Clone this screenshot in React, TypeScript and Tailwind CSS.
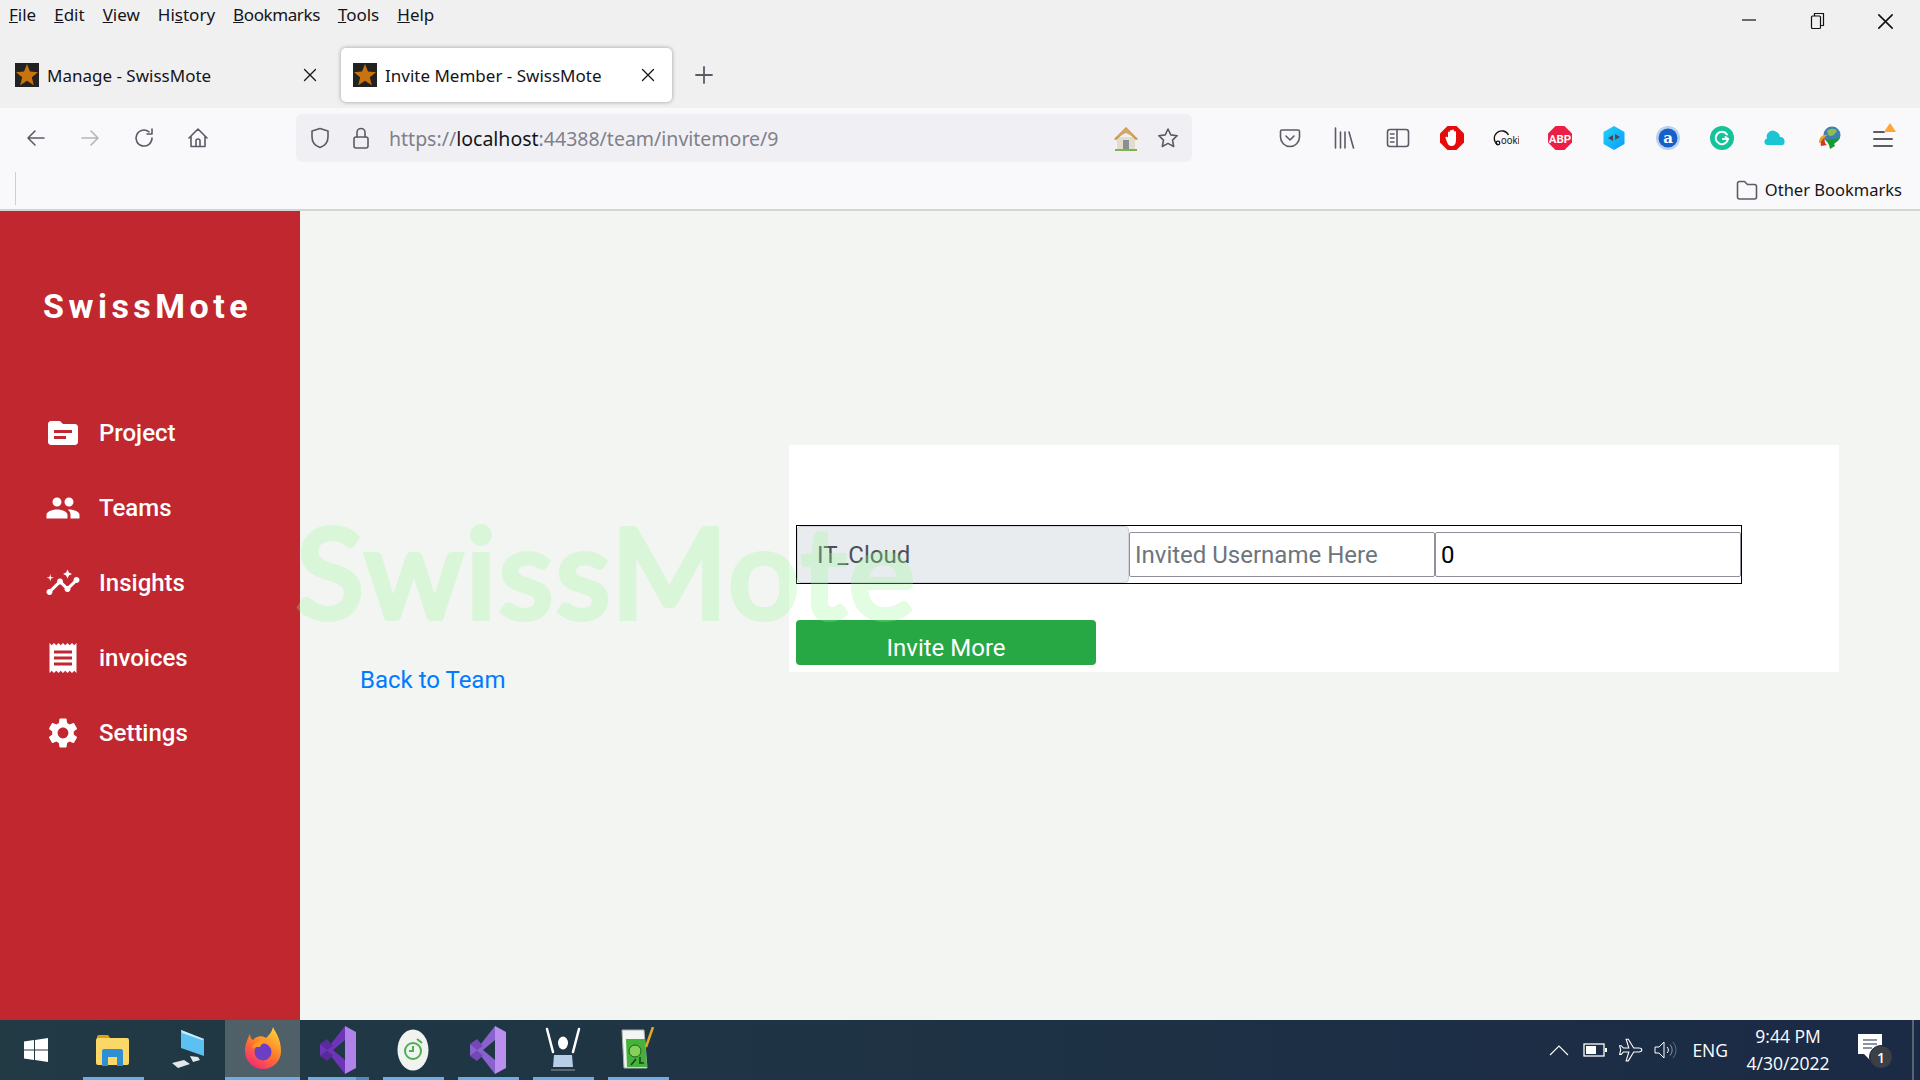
import React from "react";
import { MdInsights, MdPeople, MdReceipt, MdSettings, MdTopic } from "react-icons/md";

const chromeFont = "font-['Noto_Sans','Open_Sans',sans-serif]";

const Favicon = () => (
	<svg width="24" height="24" viewBox="0 0 24 24" className="shrink-0">
		<rect width="24" height="24" fill="#222222" />
		<path d="M12 1l3 7.6 8 .6-6.200 5 2 8L12 17.800 5.200 22.200l2-8L1 9.200l8-.6z" fill="#c9730f" />
	</svg>
);

const Stroke = ({ size = 24, color = "#5b5b66", width = 1.6, children }: { size?: number; color?: string; width?: number; children: React.ReactNode }) => (
	<svg width={size} height={size} viewBox="0 0 24 24" fill="none" stroke={color} strokeWidth={width} strokeLinecap="round" strokeLinejoin="round">
		{children}
	</svg>
);

const Close = ({ size = 14, color = "#15141a" }: { size?: number; color?: string }) => (
	<svg width={size} height={size} viewBox="0 0 14 14" stroke={color} strokeWidth="1.300" strokeLinecap="round">
		<path d="M1.500 1.500l11 11M12.500 1.500l-11 11" />
	</svg>
);

const Tab = ({ title, active }: { title: string; active?: boolean }) => (
	<div
		className={
			active
				? "flex items-center w-[331px] h-[54px] pl-[12px] pr-[17px] bg-white rounded-[5px] shadow-[0_0_4px_rgba(0,0,0,0.35)]"
				: "flex items-center w-[341px] h-[54px] pl-[15px] pr-[24px]"
		}
	>
		<Favicon />
		<span className={`ml-[8px] pt-[1px] text-[17px] text-[#15141a] ${chromeFont}`}>{title}</span>
		<span className="ml-auto">
			<Close />
		</span>
	</div>
);

const ToolSlot = ({ children }: { children: React.ReactNode }) => (
	<div className="w-[54px] h-[48px] flex items-center justify-center shrink-0">{children}</div>
);

const extensionIcons = [
	<Stroke key="pocket">
		<path d="M4 4h16a1.500 1.500 0 0 1 1.500 1.500V11a9.500 9.500 0 0 1-19 0V5.500A1.500 1.500 0 0 1 4 4z" />
		<path d="M8 10l4 4 4-4" />
	</Stroke>,
	<Stroke key="library">
		<path d="M3.500 2v20M8.500 6v16M13 6v16M17 6l4.500 16" />
	</Stroke>,
	<Stroke key="sidebar">
		<rect x="1.500" y="3.500" width="21" height="17" rx="2.500" />
		<path d="M11 3.500v17M4.500 8h3.500M4.500 12h3.500M4.500 16h3.500" />
	</Stroke>,
	<svg key="stop" width="24" height="24" viewBox="0 0 24 24">
		<path d="M7.500 0h9L24 7.500v9L16.500 24h-9L0 16.500v-9z" fill="#e50b0b" />
		<path d="M8 11V6.500a1 1 0 0 1 2 0V5a1 1 0 0 1 2 0v-.500a1 1 0 0 1 2 0V6a1 1 0 0 1 2 0v8c0 4-1.500 6-4.500 6-2.500 0-3.500-1.500-4.500-4l-1.500-4c-.4-1.200 1.200-1.800 1.800-.8z" fill="#ffffff" />
	</svg>,
	<svg key="cooki" width="26" height="24" viewBox="0 0 26 24">
		<path d="M4.500 18.500A7.500 7.500 0 1 1 15.500 9" fill="none" stroke="#111111" strokeWidth="1.300" />
		<circle cx="5" cy="17" r="1.800" fill="none" stroke="#111111" strokeWidth="1.300" />
		<text x="8" y="18" fontSize="10" fill="#222222" fontFamily="Roboto, sans-serif">ooki</text>
	</svg>,
	<svg key="abp" width="24" height="24" viewBox="0 0 24 24">
		<path d="M7.500 0h9L24 7.500v9L16.500 24h-9L0 16.500v-9z" fill="#ed1e45" />
		<text x="12" y="16.500" fontSize="11.500" fontWeight="700" textAnchor="middle" fill="#ffffff" fontFamily="Roboto, sans-serif">ABP</text>
	</svg>,
	<svg key="hex" width="24" height="24" viewBox="0 0 24 24">
		<defs>
			<linearGradient id="hexBlue" x1="0" y1="0" x2="1" y2="1">
				<stop offset="0" stopColor="#22d3f5" />
				<stop offset="1" stopColor="#0a9bff" />
			</linearGradient>
		</defs>
		<path d="M12 0l10.500 6v12L12 24 1.500 18V6z" fill="url(#hexBlue)" />
		<path d="M11 9v6l-5-3zM13 8v6l5-3z" fill="#4a4a4a" />
	</svg>,
	<svg key="alexa" width="24" height="24" viewBox="0 0 24 24">
		<circle cx="12" cy="12" r="12" fill="#b9d0ee" />
		<circle cx="12" cy="12" r="9.500" fill="#1560c9" />
		<text x="12" y="17" fontSize="15" fontWeight="700" textAnchor="middle" fill="#ffffff" fontFamily="'DejaVu Serif', serif">a</text>
	</svg>,
	<svg key="grammarly" width="24" height="24" viewBox="0 0 24 24">
		<circle cx="12" cy="12" r="12" fill="#15c39a" />
		<path d="M17 8.500A6.200 6.200 0 1 0 18 13h-5M18 13l-2.500-2" fill="none" stroke="#ffffff" strokeWidth="2" strokeLinecap="round" />
	</svg>,
	<svg key="cloud" width="24" height="24" viewBox="0 0 24 24">
		<path d="M3.500 19a3.300 3.300 0 0 1-.5-6.500 6 6 0 0 1 9.500-6.500 6 6 0 0 1 3.500 5 4 4 0 0 1 4.500 4 4 4 0 0 1-1.500 4z" fill="#19c6d1" />
	</svg>,
	<svg key="idm" width="24" height="24" viewBox="0 0 24 24">
		<circle cx="14" cy="9" r="8.500" fill="#3f7fb5" />
		<path d="M9 5c3-3 8-3 10 0-2 2-3 5-6 5s-3-3-4-5z" fill="#8fbf4a" />
		<path d="M1 17c0-6 4-9 9-8-3 1-5 4-4 7z" fill="#e9a11b" />
		<path d="M3 20c-1-4 1-7 4-8-1 3 0 6 2 7z" fill="#d2362c" />
		<path d="M8 14l14-2-6 6 1 2-5 3-1-4z" fill="#169c2d" />
	</svg>,
	<svg key="menu" width="26" height="28" viewBox="0 0 26 28" className="mb-[4px]">
		<path d="M3 10h10M3 17h18M3 24h18" stroke="#5b5b66" strokeWidth="2" strokeLinecap="round" />
		<path d="M19 1l6 9H13z" fill="#ffa436" />
	</svg>,
];

const BrowserChrome = () => (
	<div className={`shrink-0 ${chromeFont}`}>
		<div className="bg-[#f0f0f0] h-[108px]">
			<div className="flex h-[36px]">
				<div className="flex items-center gap-[18px] pl-[9px] text-[17px] leading-none text-[#15141a] h-[28px]">
					<span><u>F</u>ile</span>
					<span><u>E</u>dit</span>
					<span><u>V</u>iew</span>
					<span>Hi<u>s</u>tory</span>
					<span className="tracking-[-0.4px]"><u>B</u>ookmarks</span>
					<span><u>T</u>ools</span>
					<span><u>H</u>elp</span>
				</div>
				<div className="ml-auto flex h-[42px]">
					<div className="w-[69px] flex items-center justify-center pb-[2px]">
						<svg width="16" height="16" viewBox="0 0 16 16"><path d="M1 8h14" stroke="#111111" strokeWidth="1.200" /></svg>
					</div>
					<div className="w-[69px] flex items-center justify-center">
						<svg width="16" height="18" viewBox="0 0 16 18" fill="none" stroke="#111111" strokeWidth="1.200">
							<path d="M4.500 4V1.500h9v12H11" />
							<rect x="1.500" y="4" width="9" height="12.500" rx="1" />
						</svg>
					</div>
					<div className="w-[68px] pr-[1px] flex items-center justify-center">
						<Close size={17} color="#111111" />
					</div>
				</div>
			</div>
			<div className="flex items-center h-[72px] pt-[6px]">
				<Tab title="Manage - SwissMote" />
				<Tab title="Invite Member - SwissMote" active />
				<div className="ml-[22px]">
					<svg width="20" height="20" viewBox="0 0 20 20"><path d="M10 2v16M2 10h16" stroke="#5b5b66" strokeWidth="1.800" strokeLinecap="round" /></svg>
				</div>
			</div>
		</div>
		<div className="bg-[#f9f9fb] h-[103px] border-b-2 border-[#d4d4d4]">
			<div className="flex items-center h-[60px] pl-[9px]">
				<ToolSlot>
					<Stroke><path d="M20 12H5M11 5l-7 7 7 7" /></Stroke>
				</ToolSlot>
				<ToolSlot>
					<Stroke color="#b5b5ba"><path d="M4 12h15M13 5l7 7-7 7" /></Stroke>
				</ToolSlot>
				<ToolSlot>
					<Stroke><path d="M20 12a8 8 0 1 1-3-6.200M20 3v5h-5" /></Stroke>
				</ToolSlot>
				<ToolSlot>
					<Stroke><path d="M3 12l9-9 9 9M5 10v10.500h14V10M10 20.500V15a2 2 0 0 1 4 0v5.500" /></Stroke>
				</ToolSlot>
				<div className="ml-[71px] w-[896px] h-[48px] bg-[#f0f0f4] rounded-[6px] flex items-center pl-[12px] pr-[12px]">
					<Stroke><path d="M12 2.500l8 2.500v6c0 5.500-3.500 9-8 10.500C7.500 20 4 16.500 4 11V5z" /></Stroke>
					<span className="ml-[17px]">
						<Stroke><rect x="5" y="11" width="14" height="11" rx="2" /><path d="M8 11V6.500a4 4 0 0 1 8 0V11" /></Stroke>
					</span>
					<span className="ml-[16px] pt-[2px] text-[19.5px] text-[#80808a] whitespace-nowrap">
						https://<span className="text-[#15141a]">localhost</span>:44388/team/invitemore/9
					</span>
					<span className="ml-auto">
						<svg width="26" height="26" viewBox="0 0 26 26">
							<path d="M4 12h18v12H4z" fill="#e3dccb" />
							<path d="M1 14L13 2l12 12-2 1L13 6 3 15z" fill="#c98f42" />
							<path d="M3 13L13 3l10 10-10-5z" fill="#d7a763" />
							<rect x="10" y="15" width="6" height="9" fill="#8a8f94" />
							<path d="M2 24h22v2H2z" fill="#7cb54b" />
						</svg>
					</span>
					<span className="ml-[17px]">
						<Stroke><path d="M12 3l2.800 5.900 6.400.8-4.700 4.400 1.200 6.400-5.700-3.100-5.700 3.100 1.200-6.400-4.700-4.400 6.400-.8z" /></Stroke>
					</span>
				</div>
				<div className="ml-auto flex items-center pr-[9px]">
					{extensionIcons.map((icon) => (
						<ToolSlot key={icon.key}>{icon}</ToolSlot>
					))}
				</div>
			</div>
			<div className="flex items-center h-[41px] pl-[15px] pr-[18px]">
				<div className="w-px h-[33px] bg-[#cfcfd3]" />
				<div className="ml-auto mt-[3px] flex items-center gap-[6px]">
					<Stroke size={24}><path d="M2.500 18.500v-13a2 2 0 0 1 2-2h5l3 3h7a2 2 0 0 1 2 2v10.500a2 2 0 0 1-2 2h-15a2 2 0 0 1-2-2z" /></Stroke>
					<span className="text-[16.5px] text-[#15141a]">Other Bookmarks</span>
				</div>
			</div>
		</div>
	</div>
);

const navItems = [
	{ label: "Project", icon: <MdTopic size={36} /> },
	{ label: "Teams", icon: <MdPeople size={36} /> },
	{ label: "Insights", icon: <MdInsights size={36} /> },
	{ label: "invoices", icon: <MdReceipt size={36} /> },
	{ label: "Settings", icon: <MdSettings size={36} /> },
];

const Sidebar = () => (
	<aside className="w-[300px] shrink-0 bg-[#c1272f] text-white font-['Roboto',sans-serif]">
		<div className="pl-[43px] pt-[72px] text-[34px] leading-[46px] font-bold tracking-[4.5px]">SwissMote</div>
		<nav className="mt-[86px] flex flex-col gap-[39px] pl-[45px]">
			{navItems.map((item) => (
				<div key={item.label} className="flex items-center h-[36px] gap-[18px] text-[24px] font-medium">
					{item.icon}
					<span>{item.label}</span>
				</div>
			))}
		</nav>
	</aside>
);

const TrayIcons = () => (
	<div className="flex items-center">
		<svg width="20" height="12" viewBox="0 0 20 12" fill="none" stroke="#ffffff" strokeWidth="1.100"><path d="M1 11l9-9 9 9" /></svg>
		<svg width="24" height="14" viewBox="0 0 24 14" className="ml-[14px]">
			<rect x="1" y="1" width="20" height="12" fill="none" stroke="#ffffff" strokeWidth="1.300" />
			<rect x="3" y="3" width="10" height="8" fill="#ffffff" />
			<rect x="22" y="5" width="2" height="4" fill="#ffffff" />
		</svg>
		<svg width="26" height="26" viewBox="0 0 24 24" fill="none" stroke="#ffffff" strokeWidth="1" className="ml-[11px]">
			<path d="M22 12c0-1-1.500-1.800-3-1.800h-4.500L9.500 2H7.500l2.500 8.200H5L3 8H1.500l1 4-1 4H3l2-2.200h5L7.500 22h2l5-8.200H19c1.500 0 3-.8 3-1.800z" />
		</svg>
		<svg width="24" height="20" viewBox="0 0 24 20" fill="none" stroke="#ffffff" strokeWidth="1" className="ml-[10px]">
			<path d="M1 7h4l5-5v16l-5-5H1z" />
			<path d="M13 7a4 4 0 0 1 0 6" />
			<path d="M16 4.500a8 8 0 0 1 0 11" stroke="#8a93a3" />
			<path d="M19 2a12 12 0 0 1 0 16" stroke="#5f6b80" />
		</svg>
	</div>
);

const VisualStudio = ({ dark }: { dark?: boolean }) => (
	<svg width="36" height="48" viewBox="0 0 36 48">
		<path d="M25 0l11 6v36l-11 6z" fill={dark ? "#b183ea" : "#bb8fee"} />
		<path d="M25 0L7 23 0 18v12l7-5 18 23V34L13 24 25 14z" fill={dark ? "#6f35b8" : "#8a62cf"} />
		<path d="M0 18l7-5 6 7-6 4zM0 30l7-5 6 4-6 6z" fill={dark ? "#5a2a9c" : "#7548b8"} />
	</svg>
);

const TaskSlot = ({ children, running, active, split }: { children: React.ReactNode; running?: boolean; active?: boolean; split?: boolean }) => (
	<div className={active ? "relative w-[75px] flex items-center justify-center bg-[#4f6068]" : "relative w-[75px] flex items-center justify-center"}>
		{children}
		{running && !split && <div className={active ? "absolute bottom-0 left-0 right-0 h-[3px] bg-[#69afe5]" : "absolute bottom-0 left-[8px] right-[6px] h-[3px] bg-[#69afe5]"} />}
		{split && (
			<div className="absolute bottom-0 left-[8px] right-[6px] h-[3px] flex">
				<div className="w-[48px] bg-[#69afe5]" />
				<div className="flex-1 bg-[#4d8cbb]" />
			</div>
		)}
	</div>
);

const Taskbar = () => (
	<div className="h-[60px] shrink-0 flex bg-gradient-to-r from-[#213a44] to-[#1b2a45] text-white font-['Open_Sans',sans-serif]">
		<TaskSlot>
			<svg width="24" height="24" viewBox="0 0 24 24" fill="#ffffff" className="mr-[3px]">
				<path d="M0 3.400l10-1.400v9.500H0zM11 1.900L24 0v11.500H11zM0 12.500h10V22L0 20.600zM11 12.500h13V24l-13-1.900z" />
			</svg>
		</TaskSlot>
		<TaskSlot running>
			<svg width="33" height="32" viewBox="0 0 33 32">
				<path d="M1 3a2 2 0 0 1 2-2h9l3 4h-14z" fill="#dfa106" />
				<rect x="0" y="4" width="33" height="27" rx="2" fill="#fbd768" />
				<path d="M6 32V17a2 2 0 0 1 2-2h17a2 2 0 0 1 2 2v15h-6v-9h-9v9z" fill="#2f8fd3" />
			</svg>
		</TaskSlot>
		<TaskSlot>
			<svg width="34" height="40" viewBox="0 0 34 40">
				<path d="M10 0l23 9v17L10 18z" fill="#5cc1f2" />
				<path d="M10 0l23 9-2 1L11 3z" fill="#c7ecfb" />
				<path d="M1 33l12-3 6 4-12 4zM19 26l8 1 2 3-7 2z" fill="#e3e7ea" />
			</svg>
		</TaskSlot>
		<TaskSlot running active>
			<svg width="36" height="48" viewBox="0 0 36 48">
				<defs>
					<linearGradient id="foxFlame" x1="0.800" y1="0" x2="0.200" y2="1">
						<stop offset="0" stopColor="#ffd43a" />
						<stop offset="0.500" stopColor="#ff7a2a" />
						<stop offset="1" stopColor="#f5217e" />
					</linearGradient>
				</defs>
				<path d="M28 1c2 5 8 11 8 24a18 18 0 0 1-36 0C0 18 3 12 5 8c0 3 1 5 3 6 3-4 9-5 13-2 3-3 6-6 7-11z" fill="url(#foxFlame)" />
				<circle cx="18" cy="26" r="8.500" fill="#6b3fc4" />
				<path d="M7 22c3-7 11-10 17-6-5 0-8 2-9 5-3 0-5 0-8 1z" fill="#ff9a1f" />
			</svg>
		</TaskSlot>
		<TaskSlot running split>
			<VisualStudio dark />
		</TaskSlot>
		<TaskSlot running>
			<svg width="32" height="42" viewBox="0 0 32 42">
				<ellipse cx="16" cy="21" rx="15.500" ry="20.500" fill="#f1f3f1" />
				<circle cx="16" cy="22" r="8" fill="none" stroke="#4caf50" strokeWidth="2" />
				<path d="M16 17v5h-4M20 10l5 4" fill="none" stroke="#4caf50" strokeWidth="2" />
			</svg>
		</TaskSlot>
		<TaskSlot running>
			<VisualStudio />
		</TaskSlot>
		<TaskSlot running>
			<svg width="36" height="46" viewBox="0 0 36 46">
				<path d="M2 2l6 23M34 2l-6 23" stroke="#ffffff" strokeWidth="2.500" strokeLinecap="round" />
				<ellipse cx="18" cy="16" rx="5" ry="6.500" fill="#ffffff" />
				<path d="M9 28h18l1 12H8z" fill="#b7cfe6" />
				<path d="M6 42h24v2H6z" fill="#5b6670" />
			</svg>
		</TaskSlot>
		<TaskSlot running>
			<svg width="34" height="46" viewBox="0 0 34 46">
				<path d="M1 3h22l3 38H3z" fill="#f2f5f2" stroke="#a9b3a9" />
				<path d="M5 12h19l2 28H6z" fill="#44b23b" />
				<circle cx="14" cy="24" r="6" fill="#87d05a" stroke="#1f5e1e" />
				<path d="M10 38l5-6M18 36h5M19 30v6" stroke="#1f3e1e" strokeWidth="1.500" />
				<path d="M32 0l-7 20" stroke="#e0a826" strokeWidth="2.500" />
			</svg>
		</TaskSlot>
		<div className="ml-auto flex items-center h-full">
			<TrayIcons />
			<span className="ml-[14px] text-[17.5px]">ENG</span>
			<div className="w-[120px] flex flex-col items-center text-[17.5px] leading-[27px] pb-[1px]">
				<span>9:44 PM</span>
				<span>4/30/2022</span>
			</div>
			<div className="relative ml-[10px] w-[24px] h-[26px] mb-[6px] mr-[30px]">
				<svg width="25" height="30" viewBox="0 0 25 30">
					<path d="M0 0h24v20h-11l-1 6-6-6H0z" fill="#ffffff" />
					<path d="M5 6h14M5 10h14M5 14h9" stroke="#1b2a45" strokeWidth="1.200" />
				</svg>
				<div className="absolute left-[11px] top-[11px] w-[24px] h-[24px] rounded-full bg-[#3b3f46] border border-[#1b2a45] flex items-center justify-center text-[14px] font-semibold">
					1
				</div>
			</div>
			<div className="w-[2px] h-full bg-[#5a6475] mr-[6px]" />
		</div>
	</div>
);

const InviteCard = () => (
	<div className="w-[1050px] h-[227px] bg-white pt-[80px] pl-[7px]">
		<div className="flex items-center w-[946px] h-[59px] border border-black">
			<div className="w-[332px] h-full flex items-center pl-[19px] bg-[#e9ecef] border border-[#ced4da] rounded-[4px] text-[24px] text-[#495057]">
				IT_Cloud
			</div>
			<input
				className="w-[306px] h-[45px] px-[5px] bg-white border border-[#8f8f9d] rounded-[2px] text-[24px] text-black placeholder:text-[#6c757d]"
				placeholder="Invited Username Here"
				readOnly
			/>
			<input
				className="w-[306px] h-[45px] px-[5px] bg-white border border-[#8f8f9d] rounded-[2px] text-[24px] text-black"
				value="0"
				readOnly
			/>
		</div>
		<button className="block mt-[36px] w-[300px] h-[45px] pt-[10px] rounded-[4px] bg-[#28a745] text-white text-[24px] leading-[36px]">
			Invite More
		</button>
	</div>
);

export default function App() {
	return (
		<div className="relative h-screen w-full flex flex-col overflow-hidden font-['Roboto',sans-serif]">
			<BrowserChrome />
			<div className="relative flex-1 flex min-h-0 bg-[#f3f5f2]">
				<Sidebar />
				<main className="flex-1 flex pt-[234px]">
					<div className="w-[489px] pl-[60px] pt-[217px] shrink-0">
						<a className="text-[24px] leading-[36px] text-[#007bff]">Back to Team</a>
					</div>
					<InviteCard />
				</main>
				<div className="absolute left-[296px] top-[284px] pointer-events-none text-[125px] leading-[150px] font-normal tracking-[3px] font-['Lato',sans-serif] text-[#98fb98] opacity-[0.28] [-webkit-text-stroke:6px_#98fb98] whitespace-nowrap">
					SwissMote
				</div>
			</div>
			<Taskbar />
		</div>
	);
}
